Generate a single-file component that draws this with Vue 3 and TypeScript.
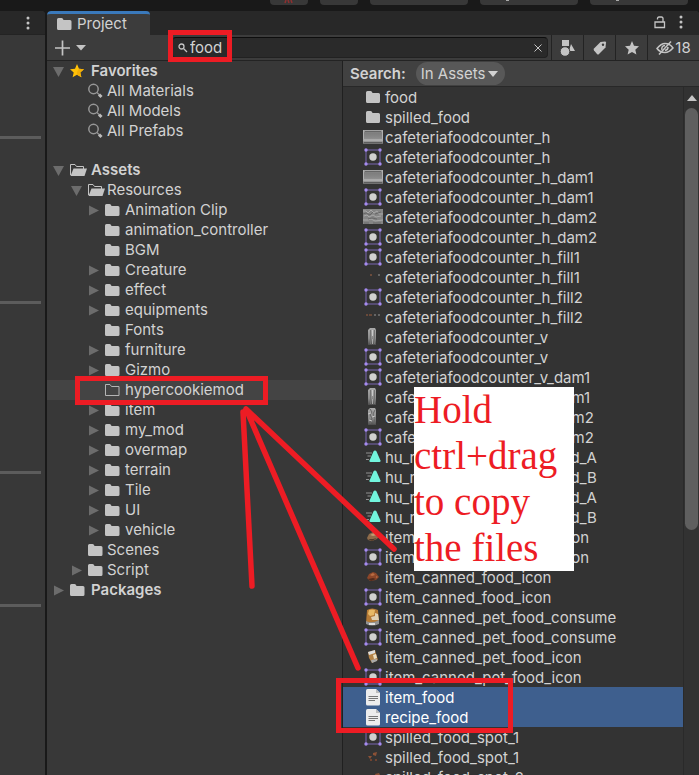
<script setup lang="ts">
import { ref } from 'vue'

type TreeIcon = 'star' | 'search' | 'open' | 'folder' | 'empty'
interface TreeRow {
  name: string
  depth: number
  icon: TreeIcon
  arrow?: 'down' | 'right'
}
type FileIcon =
  | 'folder' | 'counter' | 'cracked' | 'sprite' | 'dots' | 'dashes' | 'pillar' | 'pillarCracked'
  | 'anim' | 'bread' | 'meat' | 'can' | 'smallCan' | 'text' | 'crumbs' | 'crumbs2'
interface FileRow {
  name: string
  icon: FileIcon
  selected?: boolean
}

const favorites: TreeRow[] = [
  { name: 'Favorites', depth: 0, icon: 'star', arrow: 'down' },
  { name: 'All Materials', depth: 1, icon: 'search' },
  { name: 'All Models', depth: 1, icon: 'search' },
  { name: 'All Prefabs', depth: 1, icon: 'search' },
]
const assets: TreeRow[] = [
  { name: 'Assets', depth: 0, icon: 'open', arrow: 'down' },
  { name: 'Resources', depth: 1, icon: 'open', arrow: 'down' },
  { name: 'Animation Clip', depth: 2, icon: 'folder', arrow: 'right' },
  { name: 'animation_controller', depth: 2, icon: 'folder' },
  { name: 'BGM', depth: 2, icon: 'folder' },
  { name: 'Creature', depth: 2, icon: 'folder', arrow: 'right' },
  { name: 'effect', depth: 2, icon: 'folder', arrow: 'right' },
  { name: 'equipments', depth: 2, icon: 'folder', arrow: 'right' },
  { name: 'Fonts', depth: 2, icon: 'folder' },
  { name: 'furniture', depth: 2, icon: 'folder', arrow: 'right' },
  { name: 'Gizmo', depth: 2, icon: 'folder', arrow: 'right' },
  { name: 'hypercookiemod', depth: 2, icon: 'empty' },
  { name: 'item', depth: 2, icon: 'folder', arrow: 'right' },
  { name: 'my_mod', depth: 2, icon: 'folder', arrow: 'right' },
  { name: 'overmap', depth: 2, icon: 'folder', arrow: 'right' },
  { name: 'terrain', depth: 2, icon: 'folder', arrow: 'right' },
  { name: 'Tile', depth: 2, icon: 'folder', arrow: 'right' },
  { name: 'UI', depth: 2, icon: 'folder', arrow: 'right' },
  { name: 'vehicle', depth: 2, icon: 'folder', arrow: 'right' },
  { name: 'Scenes', depth: 1, icon: 'folder' },
  { name: 'Script', depth: 1, icon: 'folder', arrow: 'right' },
  { name: 'Packages', depth: 0, icon: 'folder', arrow: 'right' },
]
const groups = [favorites, assets]

const files: FileRow[] = [
  { name: 'food', icon: 'folder' },
  { name: 'spilled_food', icon: 'folder' },
  { name: 'cafeteriafoodcounter_h', icon: 'counter' },
  { name: 'cafeteriafoodcounter_h', icon: 'sprite' },
  { name: 'cafeteriafoodcounter_h_dam1', icon: 'counter' },
  { name: 'cafeteriafoodcounter_h_dam1', icon: 'sprite' },
  { name: 'cafeteriafoodcounter_h_dam2', icon: 'cracked' },
  { name: 'cafeteriafoodcounter_h_dam2', icon: 'sprite' },
  { name: 'cafeteriafoodcounter_h_fill1', icon: 'sprite' },
  { name: 'cafeteriafoodcounter_h_fill1', icon: 'dots' },
  { name: 'cafeteriafoodcounter_h_fill2', icon: 'sprite' },
  { name: 'cafeteriafoodcounter_h_fill2', icon: 'dashes' },
  { name: 'cafeteriafoodcounter_v', icon: 'pillar' },
  { name: 'cafeteriafoodcounter_v', icon: 'sprite' },
  { name: 'cafeteriafoodcounter_v_dam1', icon: 'sprite' },
  { name: 'cafeteriafoodcounter_v_dam1', icon: 'pillar' },
  { name: 'cafeteriafoodcounter_v_dam2', icon: 'pillarCracked' },
  { name: 'cafeteriafoodcounter_v_dam2', icon: 'sprite' },
  { name: 'hu_raise_arm_and_eat_food_A', icon: 'anim' },
  { name: 'hu_raise_arm_and_eat_food_B', icon: 'anim' },
  { name: 'hu_raise_arm_and_eat_food_A', icon: 'anim' },
  { name: 'hu_raise_arm_and_eat_food_B', icon: 'anim' },
  { name: 'item_canned_ham_food_icon', icon: 'bread' },
  { name: 'item_canned_ham_food_icon', icon: 'sprite' },
  { name: 'item_canned_food_icon', icon: 'meat' },
  { name: 'item_canned_food_icon', icon: 'sprite' },
  { name: 'item_canned_pet_food_consume', icon: 'can' },
  { name: 'item_canned_pet_food_consume', icon: 'sprite' },
  { name: 'item_canned_pet_food_icon', icon: 'smallCan' },
  { name: 'item_canned_pet_food_icon', icon: 'sprite' },
  { name: 'item_food', icon: 'text', selected: true },
  { name: 'recipe_food', icon: 'text', selected: true },
  { name: 'spilled_food_spot_1', icon: 'sprite' },
  { name: 'spilled_food_spot_1', icon: 'crumbs' },
  { name: 'spilled_food_spot_2', icon: 'crumbs2' },
]

// Heights of the component blocks between the separators of the neighbouring panel.
const blocks = [101, 162, 167, 130]

const query = ref('food')
const scope = ref('In Assets')
const active = ref('hypercookiemod')
</script>

<template>
  <div class="editor">
    <svg class="defs" width="0" height="0" aria-hidden="true">
      <defs>
        <linearGradient id="steel" x1="0" y1="0" x2="0" y2="1">
          <stop offset="0" stop-color="#aaa" /><stop offset=".2" stop-color="#7d7d7d" />
          <stop offset=".6" stop-color="#8c8c8c" /><stop offset=".72" stop-color="#b0b0b0" /><stop offset="1" stop-color="#686868" />
        </linearGradient>
        <linearGradient id="pipe" x1="0" y1="0" x2="0" y2="1">
          <stop offset="0" stop-color="#aaa" /><stop offset=".6" stop-color="#8b8b8b" /><stop offset="1" stop-color="#4c4c4c" />
        </linearGradient>
        <symbol id="i-folder" viewBox="0 0 16 16">
          <path d="M0 3.5Q0 2 1.500 2H4.500Q5.500 2 6 3L6.500 4H13Q14.500 4 14.500 5.500V12.500Q14.500 14 13 14H1.500Q0 14 0 12.500Z" fill="#c4c4c4" />
        </symbol>
        <symbol id="i-empty" viewBox="0 0 16 16">
          <path d="M.5 13.500V2.500H5L6.500 4.500H14V13.500Z" fill="none" stroke="#b4b4b4" />
        </symbol>
        <symbol id="i-open" viewBox="0 0 17 16">
          <path d="M.5 13V2.500H5L6.500 4.500H13.500V7" fill="none" stroke="#c4c4c4" />
          <path d="M3.500 6.500H17L14.500 14H.5Z" fill="#c4c4c4" />
        </symbol>
        <symbol id="i-star" viewBox="0 0 16 16">
          <path d="M7 1L9 5.700L14 6.200L10.300 9.500L11.400 14.300L7 11.800L2.600 14.300L3.700 9.500L0 6.200L5 5.700Z" fill="#ffc107" />
          <path d="M7 11.800L11.400 14.300L10.300 9.500L14 6.200L9 5.700L7 9Z" fill="#f2ae08" />
        </symbol>
        <symbol id="i-search" viewBox="0 0 16 16">
          <circle cx="5.500" cy="6" r="4.700" fill="none" stroke="#969696" stroke-width="1.500" />
          <path d="M9 9.500L11 11.500" stroke="#969696" stroke-width="1.300" />
          <path d="M11 11.500L13.500 14" stroke="#bcbcbc" stroke-width="3" />
        </symbol>
        <symbol id="f-folder" viewBox="0 0 20 20">
          <path d="M3 5.500Q3 4 4.500 4H7.500Q8.500 4 9 5L9.500 6H15.500Q17 6 17 7.500V14.500Q17 16 15.500 16H4.500Q3 16 3 14.500Z" fill="#c4c4c4" />
        </symbol>
        <symbol id="f-sprite" viewBox="0 0 20 20">
          <rect x="3" y="3" width="14" height="14" fill="none" stroke="#7a66b4" />
          <g fill="#a68cf0"><circle cx="3" cy="3" r="1.700" /><circle cx="17" cy="3" r="1.700" /><circle cx="3" cy="17" r="1.700" /><circle cx="17" cy="17" r="1.700" /></g>
          <circle cx="10" cy="10" r="3.700" fill="#d0d0d0" />
        </symbol>
        <symbol id="f-counter" viewBox="0 0 20 20">
          <rect y="3" width="20" height="14" fill="url(#steel)" />
          <path d="M.5 3V12M19.500 3V12M0 13H20" stroke="#b0b0b0" />
          <path d="M2 4.500H18" stroke="#666" /><path d="M1 15.500H19" stroke="#5d5d5d" />
        </symbol>
        <symbol id="f-cracked" viewBox="0 0 20 20">
          <rect y="2" width="20" height="15" fill="#858585" />
          <path d="M0 4H3L5 6 8 3 11 6 14 4 16 7H20M1 9L4 8 6 10 10 8 13 10 18 9M0 13H5L8 12 12 14 20 13" fill="none" stroke="#a8a8a8" />
          <path d="M0 7L3 6 7 8 10 5M5 12L9 11 14 12M12 7L18 5M1 16H6M10 16H18" fill="none" stroke="#686868" />
        </symbol>
        <symbol id="f-dots" viewBox="0 0 20 20">
          <path d="M7 8H9" stroke="#815640" stroke-width="1.500" /><path d="M15 8H17" stroke="#777" stroke-width="1.500" />
        </symbol>
        <symbol id="f-dashes" viewBox="0 0 20 20">
          <path d="M3 8H5M6 8H9" stroke="#7c523c" stroke-width="1.300" /><path d="M11 8H13M15 8H17" stroke="#777" stroke-width="1.300" />
        </symbol>
        <symbol id="f-pillar" viewBox="0 0 20 20">
          <path d="M5 3L7 1H12L13 3V18H5Z" fill="url(#pipe)" />
          <path d="M7.500 3V17M11.500 3V17" stroke="#747474" /><path d="M9.500 3V9" stroke="#ccc" /><path d="M9.500 12V17" stroke="#aaa" />
        </symbol>
        <symbol id="f-pillarCracked" viewBox="0 0 20 20">
          <path d="M5 3L7 1H12L13 3V18H5Z" fill="url(#pipe)" />
          <path d="M7 2L9 5 7 8 9 11 7 17M12 3L10 7 12 11 11 17" fill="none" stroke="#666" /><path d="M5 7L8 6M9 10L12 9M6 13L9 14" stroke="#c8c8c8" />
        </symbol>
        <symbol id="f-anim" viewBox="0 0 20 20">
          <path d="M12 3.500Q13 3.500 13.500 4.500L17.500 13.500Q17.800 15 16.500 15H7.500Q6 15 6.500 13.500L10.500 4.500Q11 3.500 12 3.500Z" fill="#72f5dd" />
          <path d="M3 6H9M4.500 9H8M3 12.500H6" stroke="#929292" />
        </symbol>
        <symbol id="f-bread" viewBox="0 0 20 20">
          <path d="M4 11L6 7 10 5 14 6 16 9 14 12 9 14 5 13Z" fill="#8e6b4a" /><path d="M7 8L11 6 14 8 10 9Z" fill="#c29b70" /><path d="M5 12L10 12 14 11 9 14Z" fill="#503828" />
        </symbol>
        <symbol id="f-meat" viewBox="0 0 20 20">
          <path d="M4 11L6 7 10 5 13 6 16 10 13 13 7 14Z" fill="#8c4629" /><path d="M7 8L10 6 12 8 9 9ZM13 9L15 10 13 11Z" fill="#ba6d43" /><path d="M5 12L10 11 13 12 8 14Z" fill="#512a1c" />
        </symbol>
        <symbol id="f-can" viewBox="0 0 20 20">
          <path d="M4 3Q9 0 15 3L16 15Q10 20 3 16Z" fill="#b57a36" />
          <path d="M6 3Q9 2 12 3L11 8 7 9 5 7Z" fill="#e8b967" /><path d="M12 6L15 7 16 13H9L8 10 12 9Z" fill="#e1d1b5" />
          <path d="M3 14Q9 17 16 13V17Q9 20 3 17Z" fill="#929292" /><path d="M6 16H12V18H6Z" fill="#ddd" />
        </symbol>
        <symbol id="f-smallCan" viewBox="0 0 20 20">
          <path d="M5 5L12 3 15 13 9 16 6 11Z" fill="#b58346" /><path d="M5 5L12 3 12 6 6 8Z" fill="#ddd" /><path d="M10 8L13 7 14 11 11 12Z" fill="#eee0c4" /><path d="M8 13L14 12 14 14 9 16Z" fill="#aaa" />
        </symbol>
        <symbol id="f-text" viewBox="0 0 20 20">
          <path d="M4.500 2H13L17 6V17Q17 18.500 15.500 18.500H4.500Q3 18.500 3 17V3.500Q3 2 4.500 2Z" fill="#ededed" />
          <path d="M13 2V6H17Z" fill="#bcbcbc" /><path d="M5.500 9.500H15M5.500 11.500H15M5.500 13.500H12" stroke="#777" />
        </symbol>
        <symbol id="f-crumbs" viewBox="0 0 20 20">
          <path d="M10 6L14 5 13 9 10 8ZM5 9L9 9 7 12Z" fill="#8b5136" /><path d="M7 13H9M12 13H14" stroke="#704330" stroke-width="2" />
        </symbol>
        <symbol id="f-crumbs2" viewBox="0 0 20 20">
          <path d="M12 7L16 6 17 8 13 10ZM5 10L9 8 10 11Z" fill="#8b5136" />
        </symbol>
      </defs>
    </svg>

    <header class="topbar">
      <span class="tool small"><svg width="10" height="4" viewBox="0 0 10 4"><path d="M2 0L1 3M4 0L5 3M7 0L8 3" stroke="#8e3030" stroke-width="1.500" /></svg></span>
      <span class="tool small"></span>
      <span class="tool"></span>
      <span class="tool lettered"></span>
      <span class="tool lettered"></span>
    </header>

    <div class="workspace">
      <aside class="neighbour">
        <div class="neighbour-bar">
          <button class="plain" aria-label="Panel menu">
            <svg width="4" height="14" viewBox="0 0 4 14" fill="#c4c4c4"><circle cx="2" cy="2" r="1.500" /><circle cx="2" cy="7" r="1.500" /><circle cx="2" cy="12" r="1.500" /></svg>
          </button>
        </div>
        <div v-for="(h, i) in blocks" :key="i" class="block" :style="{ height: h + 'px' }"></div>
      </aside>

      <main class="project">
        <div class="tabbar">
          <button class="tab"><svg width="16" height="16"><use href="#i-folder" /></svg>Project</button>
          <div class="window-tools">
            <button class="plain" aria-label="Lock">
              <svg width="12" height="14" viewBox="0 0 12 14" fill="none" stroke="#c4c4c4" stroke-width="1.300"><path d="M1 7H10.500V12.500H1ZM9 7V3.500Q9 2 7.500 2H5Q3.500 2 3.500 3.500V4.500" /></svg>
            </button>
            <button class="plain" aria-label="Project menu">
              <svg width="4" height="14" viewBox="0 0 4 14" fill="#c4c4c4"><circle cx="2" cy="2" r="1.500" /><circle cx="2" cy="7" r="1.500" /><circle cx="2" cy="12" r="1.500" /></svg>
            </button>
          </div>
        </div>

        <div class="toolbar">
          <button class="plain add" aria-label="Create">
            <svg width="32" height="16" viewBox="0 0 32 16"><path d="M0 8H15M7.500 0.500V15.500" stroke="#c4c4c4" stroke-width="1.700" /><path d="M21 5H31L26 10.500Z" fill="#c4c4c4" /></svg>
          </button>
          <div class="searchbox">
            <svg width="10" height="10" viewBox="0 0 10 10" fill="none" stroke="#c4c4c4" stroke-width="1.300"><circle cx="3.500" cy="3.500" r="2.500" /><path d="M5.500 5.500L9 9" /></svg>
            <input v-model="query" type="text" aria-label="Search assets" />
            <button class="plain" aria-label="Clear search" @click="query = ''">
              <svg width="8" height="8" viewBox="0 0 8 8" stroke="#c4c4c4"><path d="M.5 .5L7.500 7.500M7.500 .5L.5 7.500" /></svg>
            </button>
          </div>
          <button class="filter" aria-label="Search by type">
            <svg width="16" height="16" viewBox="0 0 16 16" fill="#c4c4c4"><path d="M2 0H9V6H2ZM11 4L15 11H9Z" /><circle cx="5" cy="11.500" r="4.800" stroke="#3c3c3c" /></svg>
          </button>
          <button class="filter" aria-label="Search by label">
            <svg width="14" height="14" viewBox="0 0 14 14"><path d="M7.500 1L12 .5Q13 .5 13 1.500L12.500 6.500L6 13Q5 14 4 13L1 9.500Q.3 8.500 1 7.500Z" fill="#c4c4c4" /><circle cx="10" cy="3.700" r="1.200" fill="#3c3c3c" /></svg>
          </button>
          <button class="filter" aria-label="Save search">
            <svg width="14" height="14" viewBox="0 0 14 14"><path d="M7 0L9 4.800L14 5.300L10.300 8.700L11.400 13.600L7 11L2.600 13.600L3.700 8.700L0 5.300L5 4.800Z" fill="#c4c4c4" /></svg>
          </button>
          <button class="filter hidden-count" aria-label="Hidden packages: 18">
            <svg width="18" height="14" viewBox="0 0 18 14" fill="none" stroke="#c4c4c4" stroke-width="1.500"><path d="M1 7.500Q5 2.500 9 2.500Q14 2.500 17 7Q13 11.500 9 11.500Q4 11.500 1 7.500Z" /><path d="M6 9Q5 5 9 4.500M12 6Q12 9 9 9.500" /><path d="M3 13.500L15 .5" /></svg>18
          </button>
        </div>

        <div class="columns">
          <nav class="tree" aria-label="Folders">
            <ul v-for="(group, g) in groups" :key="g">
              <li v-for="row in group" :key="row.name" :class="['depth-' + row.depth, { active: row.name === active }]">
                <button v-if="row.arrow" class="plain arrow" :aria-label="'Toggle ' + row.name">
                  <svg width="11" height="11" viewBox="0 0 11 11" fill="#6c6c6c"><path v-if="row.arrow === 'down'" d="M0 1H11L5.500 11Z" /><path v-else d="M1 .5L11 5.500L1 10.500Z" /></svg>
                </button>
                <span v-else class="arrow"></span>
                <button class="plain entry" @click="active = row.name">
                  <svg :width="row.icon === 'open' ? 17 : 16" height="16"><use :href="'#i-' + row.icon" /></svg>
                  <span>{{ row.name }}</span>
                </button>
              </li>
            </ul>
          </nav>

          <section class="results">
            <div class="scope">
              <label for="scope">Search:</label>
              <div class="pill">
                <select id="scope" v-model="scope"><option>In Assets</option></select>
                <svg width="10" height="6" viewBox="0 0 10 6"><path d="M0 0H10L5 6Z" fill="#d2d2d2" /></svg>
              </div>
            </div>
            <div class="listing">
              <ul class="files">
                <li v-for="(file, i) in files" :key="i" :class="{ selected: file.selected }">
                  <button class="plain file">
                    <svg width="20" height="20"><use :href="'#f-' + file.icon" /></svg>
                    <span>{{ file.name }}</span>
                  </button>
                </li>
              </ul>
              <div class="scrollbar">
                <svg width="10" height="6" viewBox="0 0 10 6"><path d="M0 6L5 0L10 6Z" fill="#c4c4c4" /></svg>
                <div class="thumb"></div>
              </div>
            </div>
          </section>
        </div>
      </main>
    </div>

    <div class="mark mark-query"></div>
    <div class="mark mark-folder"></div>
    <div class="mark mark-files"></div>
    <svg class="strokes" width="699" height="775" viewBox="0 0 699 775" aria-hidden="true">
      <path d="M243 412L252 586M246 409L358 668M246 409L394 549" fill="none" stroke="#ed1c24" stroke-width="5.500" stroke-linecap="round" />
    </svg>
    <p class="note">Hold ctrl+drag to copy the files</p>
  </div>
</template>

<style>
body { margin: 0; background: #191919; }
</style>

<style scoped>
.editor {
  position: relative;
  display: flex;
  flex-direction: column;
  height: 100vh;
  overflow: hidden;
  background: #191919;
  color: #d2d2d2;
  font: 15px/20px Inter, "Liberation Sans", sans-serif;
}
.editor * { box-sizing: border-box; }
.defs { position: absolute; }
svg { display: block; flex: none; }
ul { list-style: none; margin: 0; padding: 0; }
button, select, input { font: inherit; color: inherit; }
.plain { display: flex; align-items: center; padding: 0; border: 0; background: none; text-align: left; }

.topbar { display: flex; justify-content: flex-end; gap: 12px; height: 11px; padding-right: 11px; flex: none; }
.tool { display: flex; justify-content: center; width: 98px; height: 5px; border-radius: 0 0 4px 4px; background: #383838; }
.tool.small { width: 38px; }
.tool.lettered::before { content: ""; width: 3px; height: 1px; margin-right: 44px; background: #aaa; }

.workspace { display: flex; gap: 2px; flex: 1; min-height: 0; }
.neighbour { width: 45px; background: #383838; border-top-right-radius: 4px; overflow: hidden; flex: none; }
.neighbour-bar { display: flex; align-items: center; justify-content: flex-end; height: 24px; padding-right: 15px; background: #282828; border-bottom: 1px solid #232323; }
.neighbour .block { box-sizing: content-box; margin-right: 4px; border-bottom: 3px solid #5c5c5c; }

.project { display: flex; flex-direction: column; flex: 1; min-width: 0; background: #3c3c3c; border-radius: 4px 4px 0 0; overflow: hidden; }
.tabbar { display: flex; justify-content: space-between; height: 24px; background: #282828; flex: none; }
.tab { display: flex; align-items: center; gap: 4px; width: 103px; padding: 0 10px 2px; border: 0; border-top: 3px solid #3a79bb; border-radius: 4px 4px 0 0; background: #3c3c3c; }
.window-tools { display: flex; align-items: center; gap: 13px; padding: 0 16px 2px 0; }

.toolbar { display: flex; height: 26px; border-bottom: 1px solid #232323; flex: none; }
.add { width: 125px; padding-left: 8px; }
.searchbox { display: flex; align-items: center; flex: 1; min-width: 0; height: 21px; margin: 2px 3px 0 0; padding: 0 5px; gap: 2px; border: 1px solid #212121; border-top-color: #0d0d0d; border-radius: 4px; background: #2a2a2a; }
.searchbox input { flex: 1; min-width: 0; padding: 0; border: 0; outline: 0; background: none; }
.filter { display: flex; align-items: center; justify-content: center; width: 32px; padding: 0; border: 0; border-left: 1px solid #232323; background: none; }
.hidden-count { width: 52px; gap: 1px; }

.columns { display: flex; flex: 1; min-height: 0; }
.tree { width: 296px; border-right: 1px solid #202020; background: #383838; overflow: hidden; }
.tree ul + ul { margin-top: 19px; }
.tree li { display: flex; align-items: center; gap: 6px; height: 20px; padding-left: 6px; }
.tree .depth-1 { padding-left: 24px; }
.tree .depth-2 { padding-left: 41px; }
.tree .active { background: #444; }
.arrow { width: 11px; flex: none; }
.entry { gap: 3px; white-space: nowrap; }
.entry svg { margin-right: -1px; }
.entry svg[width="16"] { margin-right: 0; }
.depth-2 .entry { gap: 4px; }
.depth-0 .entry { gap: 5px; font-weight: 600; }

.results { display: flex; flex-direction: column; flex: 1; min-width: 0; background: #333; }
.scope { display: flex; align-items: center; gap: 10px; height: 26px; padding-left: 7px; background: #414141; border-bottom: 1px solid #282828; flex: none; }
.scope label { font-weight: 600; }
.pill { display: flex; align-items: center; gap: 2px; height: 23px; padding: 0 7px 0 5px; border-radius: 12px; background: #585858; }
.pill select { appearance: none; border: 0; padding: 0; background: none; outline: 0; }
.listing { display: flex; flex: 1; min-height: 0; }
.files { flex: 1; min-width: 0; overflow: hidden; }
.files li { height: 20px; }
.selected { background: #3e5f8e; color: #fff; }
.file { width: 100%; height: 20px; gap: 2px; padding-left: 20px; white-space: nowrap; }
.file span { padding-top: 2px; }
.scrollbar { display: flex; flex-direction: column; align-items: center; gap: 7px; width: 16px; padding-top: 8px; border-left: 1px solid #2a2a2a; background: #323232; }
.thumb { width: 13px; height: 62%; border-radius: 7px; background: #5f5f5f; }

.mark { position: absolute; border: 5px solid #ed1c24; pointer-events: none; }
.mark-query { left: 168px; top: 30px; width: 64px; height: 32px; }
.mark-folder { left: 75px; top: 376px; width: 193px; height: 29px; }
.mark-files { left: 336px; top: 678px; width: 177px; height: 55px; }
.strokes { position: absolute; left: 0; top: 0; pointer-events: none; }
.note { position: absolute; left: 414px; top: 387px; width: 160px; margin: 0; background: #fff; color: #ed1c24; font: 39px/46px "Liberation Serif", serif; }
</style>
